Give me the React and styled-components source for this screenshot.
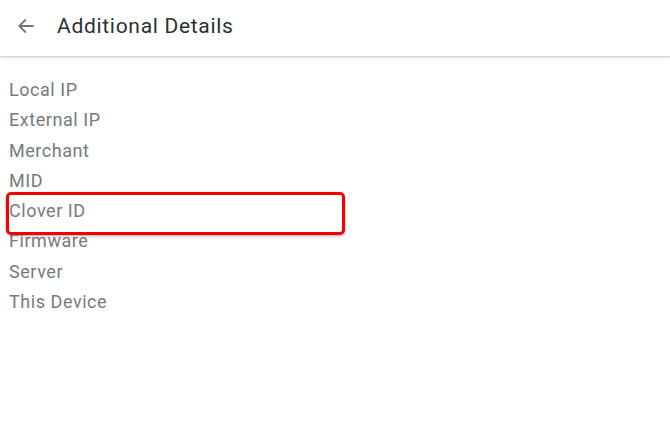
import styled, { createGlobalStyle } from "styled-components";

const GlobalStyle = createGlobalStyle`
  html, body {
    margin: 0;
    padding: 0;
    background: #ffffff;
    font-family: Roboto, "Liberation Sans", sans-serif;
  }
`;

const Page = styled.div`
  position: relative;
  width: 670px;
  height: 443px;
  overflow: hidden;
  background: #ffffff;
`;

const Header = styled.header`
  display: flex;
  align-items: center;
  height: 57px;
  padding: 0 0 0 16px;
  box-sizing: border-box;
  border-bottom: 1px solid #d6d6d6;
  box-shadow: 0 1px 3px rgba(0, 0, 0, 0.12);
`;

const BackButton = styled.button`
  display: flex;
  align-items: center;
  justify-content: center;
  width: 20px;
  height: 20px;
  padding: 0;
  margin-right: 21px;
  margin-top: -4px;
  border: none;
  background: none;
  color: #6f757a;
`;

const Title = styled.h1`
  margin: -5px 0 0;
  font-size: 21px;
  font-weight: 400;
  color: #2b2f33;
  letter-spacing: 0.7px;
`;

const List = styled.ul`
  list-style: none;
  margin: 0;
  padding: 18px 0 0 9px;
`;

const Item = styled.li`
  height: 30.3px;
  line-height: 30px;
  font-size: 18px;
  color: #777b7f;
  letter-spacing: 0.55px;
`;

const Highlight = styled.div`
  position: absolute;
  left: 6px;
  top: 192px;
  width: 333px;
  height: 37px;
  border: 3px solid #f20000;
  border-radius: 5px;
  box-shadow: 0 1px 3px rgba(0, 0, 0, 0.35);
`;

const items = [
  "Local IP",
  "External IP",
  "Merchant",
  "MID",
  "Clover ID",
  "Firmware",
  "Server",
  "This Device",
];

function App() {
  return (
    <Page>
      <GlobalStyle />
      <Header>
        <BackButton aria-label="Back">
          <svg width="20" height="20" viewBox="0 0 24 24" fill="none">
            <path
              d="M20 12H5M11 5l-7 7 7 7"
              stroke="currentColor"
              strokeWidth="2.2"
              strokeLinecap="square"
            />
          </svg>
        </BackButton>
        <Title>Additional Details</Title>
      </Header>
      <List>
        {items.map((label) => (
          <Item key={label}>{label}</Item>
        ))}
      </List>
      <Highlight />
    </Page>
  );
}

export default App;
